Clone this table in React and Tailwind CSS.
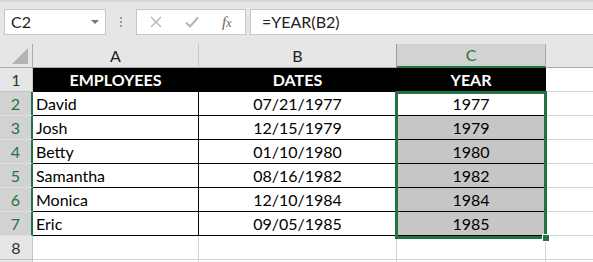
import React from "react";

const rows = [
  { name: "David", date: "07/21/1977", year: "1977" },
  { name: "Josh", date: "12/15/1979", year: "1979" },
  { name: "Betty", date: "01/10/1980", year: "1980" },
  { name: "Samantha", date: "08/16/1982", year: "1982" },
  { name: "Monica", date: "12/10/1984", year: "1984" },
  { name: "Eric", date: "09/05/1985", year: "1985" },
];

const font = { fontFamily: "Lato, 'Open Sans', sans-serif" };

function FormulaBar() {
  return (
    <div className="h-[44px] bg-[#e6e6e6] border-t-2 border-[#d6d6d6] flex items-start pt-[7px]">
      {/* name box */}
      <div className="ml-[4px] w-[102px] h-[26px] bg-white border border-[#c6c6c6] flex items-center justify-between pl-[6px] pr-[6px]">
        <span className="text-[16px] text-[#222]">C2</span>
        <span className="w-0 h-0 border-l-[4px] border-r-[4px] border-t-[4px] border-l-transparent border-r-transparent border-t-[#777]" />
      </div>
      <div className="w-[30px] h-[26px] flex flex-col items-center justify-center gap-[2px]">
        <span className="w-[2px] h-[2px] bg-[#9a9a9a]" />
        <span className="w-[2px] h-[2px] bg-[#9a9a9a]" />
        <span className="w-[2px] h-[2px] bg-[#9a9a9a]" />
      </div>
      {/* cancel / enter / function */}
      <div className="w-[110px] h-[26px] bg-white border border-[#c6c6c6] flex items-center">
        <svg className="ml-[13px]" width="12" height="12" viewBox="0 0 12 12">
          <path d="M1 1 L11 11 M11 1 L1 11" stroke="#b4b4b4" strokeWidth="1.4" fill="none" />
        </svg>
        <svg className="ml-[23px]" width="14" height="12" viewBox="0 0 14 12">
          <path d="M1 6.5 L5 10.5 L13 1.5" stroke="#b4b4b4" strokeWidth="2" fill="none" />
        </svg>
        <span className="ml-[23px] text-[15px] italic text-[#666]" style={{ fontFamily: "'Liberation Serif', serif" }}>
          f<span className="text-[12px]">x</span>
        </span>
      </div>
      <div className="ml-[4px] flex-1 h-[26px] bg-white border border-[#c6c6c6] border-r-0 flex items-center pl-[11px]">
        <span className="text-[16px] text-[#222]">=YEAR(B2)</span>
      </div>
    </div>
  );
}

function ColumnHeaders() {
  return (
    <div className="flex h-[24px] bg-[#e6e6e6] text-[16px]">
      <div className="w-[33px] border-r border-b border-[#ababab] flex items-end justify-end pr-[4px] pb-[3px]">
        <svg width="16" height="16" viewBox="0 0 16 16">
          <path d="M16 0 L16 16 L0 16 Z" fill="#b4b4b4" />
        </svg>
      </div>
      <div className="w-[166px] border-r border-b border-r-[#c6c6c6] border-b-[#ababab] flex items-center justify-center text-[#222]">A</div>
      <div className="w-[198px] border-r border-b border-r-[#9a9a9a] border-b-[#ababab] flex items-center justify-center text-[#222]">B</div>
      <div className="w-[149px] bg-[#d2d2d2] border-r border-b-2 border-r-[#ababab] border-b-[#217346] flex items-center justify-center text-[#217346]">C</div>
      <div className="flex-1 border-b border-[#ababab]" />
    </div>
  );
}

function RowHeader({ n, selected }) {
  return selected ? (
    <div className="w-[33px] bg-[#d2d2d2] border-r-2 border-b border-r-[#217346] border-b-[#e1e1e1] flex items-center justify-center text-[#217346]">
      {n}
    </div>
  ) : (
    <div className="w-[33px] bg-[#e6e6e6] border-r border-b border-[#c6c6c6] flex items-center justify-center text-[#333]">
      {n}
    </div>
  );
}

export default function App() {
  return (
    <div className="w-[593px] h-[262px] overflow-hidden bg-white" style={font}>
      <FormulaBar />
      <ColumnHeaders />
      <div className="relative text-[16px]">
        {/* header row */}
        <div className="flex h-[24px]">
          <RowHeader n={1} />
          <div className="w-[166px] bg-black border-r border-b border-black flex items-center justify-center font-bold text-white">EMPLOYEES</div>
          <div className="w-[198px] bg-black border-r border-b border-black flex items-center justify-center font-bold text-white">DATES</div>
          <div className="w-[149px] bg-black border-r border-b border-black flex items-center justify-center font-bold text-white">YEAR</div>
          <div className="flex-1 border-b border-[#d4d4d4]" />
        </div>
        {rows.map((r, i) => (
          <div key={r.name} className="flex h-[24px]">
            <RowHeader n={i + 2} selected />
            <div className="w-[166px] border-r border-b border-black flex items-center pl-[3px] text-black">{r.name}</div>
            <div className="w-[198px] border-r border-b border-black flex items-center justify-center text-black">{r.date}</div>
            <div className={`w-[149px] border-r border-b border-black flex items-center justify-center text-black ${i === 0 ? "bg-white" : "bg-[#c6c6c6]"}`}>
              {r.year}
            </div>
            <div className="flex-1 border-b border-[#d4d4d4]" />
          </div>
        ))}
        {/* empty rows */}
        <div className="flex h-[24px]">
          <RowHeader n={8} />
          <div className="w-[166px] border-r border-b border-[#d4d4d4]" />
          <div className="w-[198px] border-r border-b border-[#d4d4d4]" />
          <div className="w-[149px] border-r border-b border-[#d4d4d4]" />
          <div className="flex-1 border-b border-[#d4d4d4]" />
        </div>
        <div className="flex h-[24px]">
          <div className="w-[33px] bg-[#e6e6e6] border-r border-[#c6c6c6]" />
          <div className="w-[166px] border-r border-[#d4d4d4]" />
          <div className="w-[198px] border-r border-[#d4d4d4]" />
          <div className="w-[149px] border-r border-[#d4d4d4]" />
        </div>

        {/* selection outline C2:C7 and fill handle */}
        <div className="absolute left-[395px] top-[23px] w-[152px] h-[148px] border-[3px] border-[#217346]" />
        <div className="absolute left-[542px] top-[166px] w-[8px] h-[8px] bg-[#217346] border border-white" />
      </div>
    </div>
  );
}
